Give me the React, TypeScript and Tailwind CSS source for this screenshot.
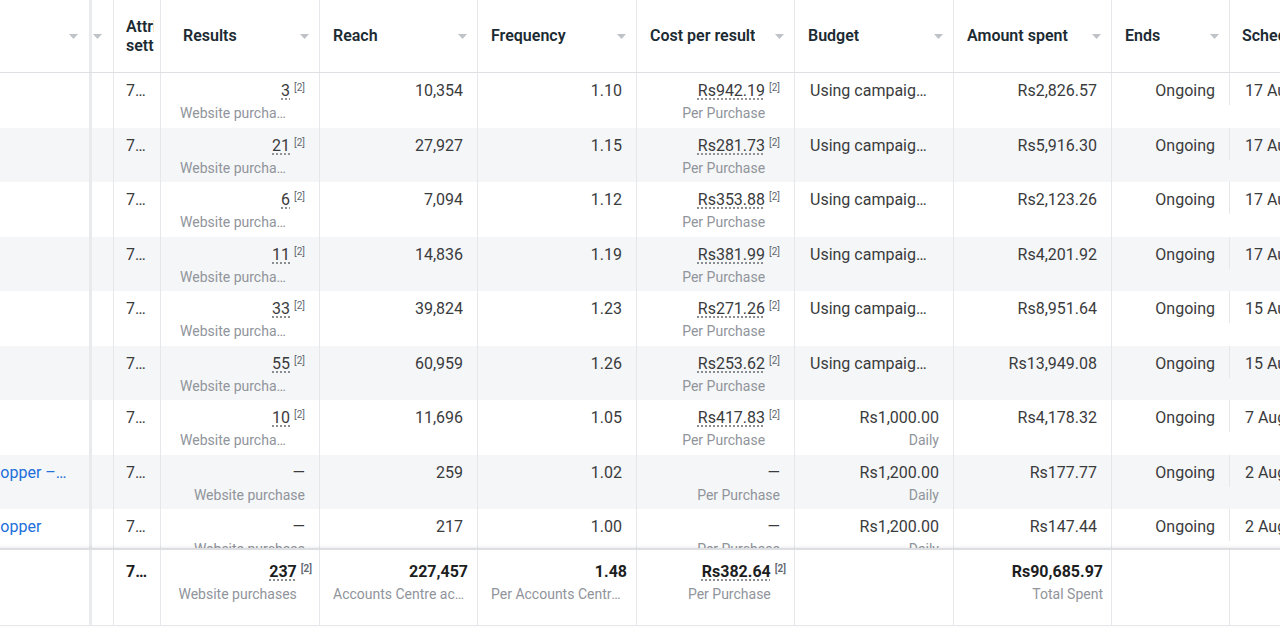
import React, { useLayoutEffect, useRef } from 'react';

type Row = {
  name?: string;
  results: string;
  resultSup: boolean;
  reach: string;
  freq: string;
  cost: string;
  budget?: string;
  spent: string;
  schedule: string;
};

const rows: Row[] = [
  { results: '3', resultSup: true, reach: '10,354', freq: '1.10', cost: 'Rs942.19', spent: 'Rs2,826.57', schedule: '17 Aug 2024' },
  { results: '21', resultSup: true, reach: '27,927', freq: '1.15', cost: 'Rs281.73', spent: 'Rs5,916.30', schedule: '17 Aug 2024' },
  { results: '6', resultSup: true, reach: '7,094', freq: '1.12', cost: 'Rs353.88', spent: 'Rs2,123.26', schedule: '17 Aug 2024' },
  { results: '11', resultSup: true, reach: '14,836', freq: '1.19', cost: 'Rs381.99', spent: 'Rs4,201.92', schedule: '17 Aug 2024' },
  { results: '33', resultSup: true, reach: '39,824', freq: '1.23', cost: 'Rs271.26', spent: 'Rs8,951.64', schedule: '15 Aug 2024' },
  { results: '55', resultSup: true, reach: '60,959', freq: '1.26', cost: 'Rs253.62', spent: 'Rs13,949.08', schedule: '15 Aug 2024' },
  { results: '10', resultSup: true, reach: '11,696', freq: '1.05', cost: 'Rs417.83', budget: 'Rs1,000.00', spent: 'Rs4,178.32', schedule: '7 Aug 2024' },
  { name: 'Shopper – Retargeting', results: '—', resultSup: false, reach: '259', freq: '1.02', cost: '—', budget: 'Rs1,200.00', spent: 'Rs177.77', schedule: '2 Aug 2024' },
  { name: 'Shopper', results: '—', resultSup: false, reach: '217', freq: '1.00', cost: '—', budget: 'Rs1,200.00', spent: 'Rs147.44', schedule: '2 Aug 2024' },
];

const line = 'border-[#e6e7ea]';
const band = 'border-r-[3px] border-[#e9eaec]';

const Arrow = () => (
  <svg width="9" height="5" viewBox="0 0 9 5" className="shrink-0">
    <path d="M0 0h9L4.5 5z" fill="#bfc3c8" />
  </svg>
);

const Sup = ({ bold = false }: { bold?: boolean }) => (
  <span className={`ml-[4px] mt-[1px] shrink-0 text-[10px] leading-3 text-[#606770] ${bold ? 'font-semibold' : ''}`}>
    [2]
  </span>
);

// Right-aligned value with optional grey second line and [2] marker
const Stat = ({
  value,
  sub,
  sup = false,
  dotted = false,
  bold = false,
  subMax = '',
}: {
  value: string;
  sub?: string;
  sup?: boolean;
  dotted?: boolean;
  bold?: boolean;
  subMax?: string;
}) => (
  <div className="flex items-start justify-end">
    <div className="min-w-0 flex-1 text-right">
      <div className={`truncate text-base leading-5 ${bold ? 'font-bold text-[#1c1e21]' : 'text-[#3a3b3d]'}`}>
        <span className={dotted ? 'underline decoration-dotted decoration-[#707378] underline-offset-[3px]' : ''}>
          {value}
        </span>
      </div>
      {sub && (
        <div className={`mt-[3px] truncate text-sm leading-[18px] text-[#90949b] ${subMax ? `ml-auto ${subMax}` : ''}`}>
          {sub}
        </div>
      )}
    </div>
    {sup && <Sup bold={bold} />}
  </div>
);

const HeaderCell = ({ label, w, pl = 'pl-[13px]' }: { label: string; w: string; pl?: string }) => (
  <div className={`${w} shrink-0 border-r ${line} flex items-center justify-between ${pl} pr-[10px]`}>
    <span className="truncate font-semibold text-[#1c2b33]">{label}</span>
    <Arrow />
  </div>
);

export default function App() {
  const scroller = useRef<HTMLDivElement>(null);

  // the grid is scrolled a little to the right, as in the original view
  useLayoutEffect(() => {
    if (scroller.current) scroller.current.scrollLeft = 106;
  }, []);

  return (
    <div
      ref={scroller}
      className="h-[629px] w-full overflow-hidden bg-white text-base"
      style={{ fontFamily: 'Roboto, "Liberation Sans", sans-serif' }}
    >
      <div className="flex w-[1540px] flex-col">
        {/* Header */}
        <div className="flex h-[73px] border-b border-[#dddfe2]">
          <div className={`w-[198px] shrink-0 ${band} flex items-center justify-between pl-3 pr-[11px]`}>
            <span className="truncate font-semibold text-[#1c2b33]">Ad set</span>
            <Arrow />
          </div>
          <div className={`w-[22px] shrink-0 border-r ${line} flex items-center pl-[1px]`}>
            <Arrow />
          </div>
          <div className={`w-[47px] shrink-0 border-r ${line} flex items-center pl-[12px]`}>
            <div className="w-[28px] overflow-hidden text-[16px] font-semibold leading-[19px] text-[#1c2b33]">
              Attribution setting
            </div>
          </div>
          <HeaderCell label="Results" w="w-[159px]" pl="pl-[22px]" />
          <HeaderCell label="Reach" w="w-[158px]" />
          <HeaderCell label="Frequency" w="w-[159px]" />
          <HeaderCell label="Cost per result" w="w-[158px]" />
          <HeaderCell label="Budget" w="w-[159px]" />
          <HeaderCell label="Amount spent" w="w-[158px]" />
          <HeaderCell label="Ends" w="w-[118px]" />
          <div className="flex w-[200px] shrink-0 items-center pl-[12px]">
            <span className="whitespace-nowrap font-semibold text-[#1c2b33]">Schedule</span>
          </div>
        </div>

        {/* Rows */}
        <div className="h-[475px] overflow-hidden">
          {rows.map((r, i) => (
            <div key={i} className={`flex h-[54.5px] ${i % 2 ? 'bg-[#f5f6f7]' : 'bg-white'}`}>
              <div className={`w-[198px] shrink-0 ${band} flex items-start gap-3 pl-3 pr-5 pt-[8px]`}>
                <div className="mt-[2px] h-4 w-4 shrink-0 rounded-sm border border-[#bec3c9] bg-white" />
                <div className="h-5 w-9 shrink-0 rounded-full bg-[#1877f2]" />
                {r.name && <div className="min-w-0 flex-1 truncate leading-5 text-[#216fdb]">{r.name}</div>}
              </div>
              <div className={`w-[22px] shrink-0 border-r ${line}`} />
              <div className={`w-[47px] shrink-0 border-r ${line} pl-[12px] pt-[8px]`}>
                <div className="w-[21px] truncate leading-5 text-[#3a3b3d]">7-day click or 1-day view</div>
              </div>
              <div className={`w-[159px] shrink-0 border-r ${line} pl-[15px] pr-[14px] pt-[8px]`}>
                <Stat
                  value={r.results}
                  sub="Website purchase"
                  sup={r.resultSup}
                  dotted={r.resultSup}
                  subMax={r.resultSup ? 'max-w-[110px]' : ''}
                />
              </div>
              <div className={`w-[158px] shrink-0 border-r ${line} pl-[13px] pr-[14px] pt-[8px]`}>
                <Stat value={r.reach} />
              </div>
              <div className={`w-[159px] shrink-0 border-r ${line} pl-[13px] pr-[14px] pt-[8px]`}>
                <Stat value={r.freq} />
              </div>
              <div className={`w-[158px] shrink-0 border-r ${line} pl-[13px] pr-[14px] pt-[8px]`}>
                <Stat value={r.cost} sub="Per Purchase" sup={r.resultSup} dotted={r.resultSup} />
              </div>
              <div className={`w-[159px] shrink-0 border-r ${line} pl-[15px] pt-[8px] ${r.budget ? 'pr-[14px]' : 'pr-[24px]'}`}>
                {r.budget ? (
                  <Stat value={r.budget} sub="Daily" />
                ) : (
                  <div className="truncate leading-5 text-[#3a3b3d]">Using campaign budget</div>
                )}
              </div>
              <div className={`w-[158px] shrink-0 border-r ${line} pl-[13px] pr-[14px] pt-[8px]`}>
                <Stat value={r.spent} />
              </div>
              <div className="w-[117px] shrink-0 pr-[14px] pt-[8px] text-right leading-5 text-[#3a3b3d]">Ongoing</div>
              <div className="w-[200px] shrink-0">
                <div className={`h-8 border-l ${line} whitespace-nowrap pl-[15px] pt-[8px] leading-5 text-[#3a3b3d]`}>
                  {r.schedule}
                </div>
              </div>
            </div>
          ))}
        </div>

        {/* Totals */}
        <div className="relative flex h-[78px] border-t-2 border-b border-t-[#dcdee1] border-b-[#e6e7ea] bg-white shadow-[0_-1px_3px_rgba(0,0,0,0.08)]">
          <div className={`w-[198px] shrink-0 ${band}`} />
          <div className={`w-[22px] shrink-0 border-r ${line}`} />
          <div className={`w-[47px] shrink-0 border-r ${line} pl-[12px] pt-[12px]`}>
            <div className="w-[21px] truncate font-bold leading-5 text-[#1c1e21]">7-day click or 1-day view</div>
          </div>
          <div className={`w-[159px] shrink-0 border-r ${line} pl-[13px] pr-[7px] pt-[12px]`}>
            <Stat value="237" sub="Website purchases" sup dotted bold />
          </div>
          <div className={`w-[158px] shrink-0 border-r ${line} pl-[13px] pr-[9px] pt-[12px]`}>
            <Stat value="227,457" sub="Accounts Centre accounts" bold />
          </div>
          <div className={`w-[159px] shrink-0 border-r ${line} pl-[13px] pr-[9px] pt-[12px]`}>
            <Stat value="1.48" sub="Per Accounts Centre account" bold />
          </div>
          <div className={`w-[158px] shrink-0 border-r ${line} pl-[13px] pr-[8px] pt-[12px]`}>
            <Stat value="Rs382.64" sub="Per Purchase" sup dotted bold />
          </div>
          <div className={`w-[159px] shrink-0 border-r ${line}`} />
          <div className={`w-[158px] shrink-0 border-r ${line} pl-[13px] pr-[8px] pt-[12px]`}>
            <Stat value="Rs90,685.97" sub="Total Spent" bold />
          </div>
          <div className={`w-[118px] shrink-0 border-r ${line}`} />
          <div className="w-[200px] shrink-0" />
        </div>
      </div>
    </div>
  );
}
